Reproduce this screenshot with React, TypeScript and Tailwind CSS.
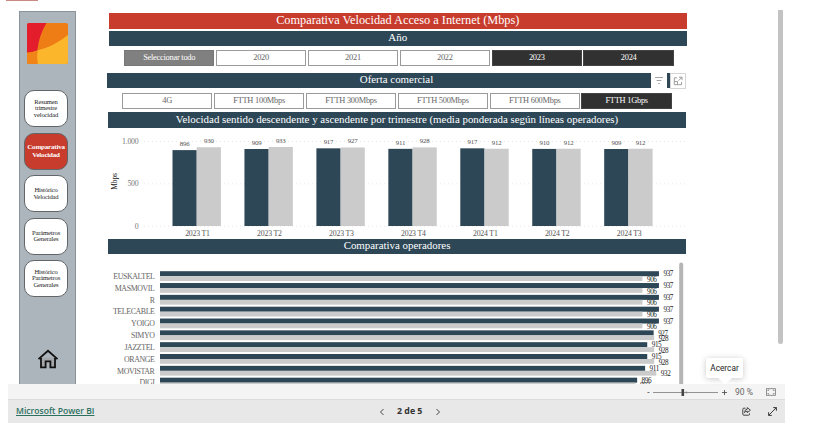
import clsx from "clsx"

const NAV_ITEMS = [
  { lines: ["Resumen", "trimestre", "velocidad"] },
  { lines: ["Comparativa", "Velocidad"], active: true },
  { lines: ["Histórico", "Velocidad"] },
  { lines: ["Parámetros", "Generales"] },
  { lines: ["Histórico", "Parámetros", "Generales"] },
]

const YEARS = [
  { label: "Seleccionar todo", tone: "partial" },
  { label: "2020" },
  { label: "2021" },
  { label: "2022" },
  { label: "2023", tone: "selected" },
  { label: "2024", tone: "selected" },
]

const OFFERS = [
  { label: "4G" },
  { label: "FTTH 100Mbps" },
  { label: "FTTH 300Mbps" },
  { label: "FTTH 500Mbps" },
  { label: "FTTH 600Mbps" },
  { label: "FTTH 1Gbps", tone: "selected" },
]

const QUARTERS = [
  { label: "2023 T1", down: 896, up: 930 },
  { label: "2023 T2", down: 909, up: 933 },
  { label: "2023 T3", down: 917, up: 927 },
  { label: "2023 T4", down: 911, up: 928 },
  { label: "2024 T1", down: 917, up: 912 },
  { label: "2024 T2", down: 910, up: 912 },
  { label: "2024 T3", down: 909, up: 912 },
]

const OPERATORS = [
  { label: "EUSKALTEL", down: 937, up: 906 },
  { label: "MASMOVIL", down: 937, up: 906 },
  { label: "R", down: 937, up: 906 },
  { label: "TELECABLE", down: 937, up: 906 },
  { label: "YOIGO", down: 937, up: 906 },
  { label: "SIMYO", down: 927, up: 928 },
  { label: "JAZZTEL", down: 915, up: 928 },
  { label: "ORANGE", down: 915, up: 928 },
  { label: "MOVISTAR", down: 911, up: 932 },
  { label: "DIGI", down: 896, up: 893 },
]

type Option = { label: string; tone?: string }

const Slicer = ({ options }: { options: Option[] }) => (
  <div className="flex h-4 gap-[1.5px]">
    {options.map(({ label, tone }) => (
      <button
        key={label}
        className={clsx(
          "flex w-[90.4px] shrink-0 items-center justify-center border text-[8.4px] leading-none tracking-[-0.25px] whitespace-nowrap",
          !tone && "border-[#9a9a9a] bg-white text-[#666]",
          tone === "partial" && "border-[#777] bg-[#808080] text-white",
          tone === "selected" && "border-[#444] bg-[#313131] text-white"
        )}
      >
        {label}
      </button>
    ))}
  </div>
)

const Logo = () => (
  <svg viewBox="0 0 41 41" className="ml-[7px] h-[41px] w-[41px]" aria-hidden="true">
    <defs>
      <clipPath id="logo">
        <rect width="41" height="41" rx="2" />
      </clipPath>
    </defs>
    <g clipPath="url(#logo)">
      <rect width="41" height="41" fill="#ee7d16" />
      <path d="M0 0H19.5Q12 12 10.300 27.500Q5.500 29.200 0 29.800Z" fill="#e31d2b" />
      <path d="M10.300 27.500Q26 24 41 12V41H10.500Q9.700 34 10.300 27.500Z" fill="#fbb62c" />
      <path d="M0 29.800Q5.500 29.200 10.300 27.500Q9.700 34 10.500 41H0Z" fill="#f08419" />
    </g>
  </svg>
)

const Sidebar = () => (
  <aside className="mt-[11px] ml-[11px] flex h-[374px] w-[57px] shrink-0 flex-col border-t border-r border-l border-[#8b949b] bg-[#acb5bc] pt-[11px]">
    <Logo />
    <nav className="mt-[26px] ml-[4px] flex flex-col gap-[5.5px]">
      {NAV_ITEMS.map(({ lines, active }) => (
        <button
          key={lines.join(" ")}
          className={clsx(
            "flex h-[37px] w-11 flex-col items-center justify-center rounded-[10px] border border-[#626669]",
            active
              ? "bg-[#c83c2e] text-[7px] leading-[8.5px] font-bold tracking-[-0.2px] text-white"
              : "bg-white text-[6.6px] leading-[6.3px] tracking-[-0.15px] text-[#222]"
          )}
        >
          {lines.map((line) => (
            <span key={line} className="whitespace-nowrap">{line}</span>
          ))}
        </button>
      ))}
    </nav>
    <svg viewBox="0 0 22 20" className="mt-[52px] ml-[17px] h-5 w-[22px]" fill="none" stroke="#111" strokeWidth="1.8">
      <path d="M1.500 10.200L11 1.800L20.500 10.200" />
      <path d="M4 8.500V18.300H8.600V12.300H13.400V18.300H18V8.500" fill="#a4a7a9" />
    </svg>
  </aside>
)

const QuarterChart = () => {
  const y = (value: number) => 98 - value * 0.0847

  return (
    <svg width="579" height="111" viewBox="0 0 579 111" className="block tracking-[-0.2px]" fontSize="7.800" fill="#555">
      {[1000, 500, 0].map((tick) => (
        <g key={tick}>
          <line x1="36" x2="579" y1={y(tick) + 0.2} y2={y(tick) + 0.2} stroke="#dcdcdc" strokeWidth="0.700" strokeDasharray="1 3" />
          <text x="30.500" y={y(tick) + 2.5} textAnchor="end" fill="#777">
            {tick === 1000 ? "1.000" : tick}
          </text>
        </g>
      ))}
      <text transform="translate(9 53.500) rotate(-90)" textAnchor="middle" fontSize="7.500" fill="#222">
        Mbps
      </text>
      {QUARTERS.map(({ label, down, up }, i) => {
        const x = 64.5 + i * 71.95
        return (
          <g key={label}>
            <rect x={x} y={y(down)} width="24.200" height={down * 0.0847} fill="#2d4757" />
            <rect x={x + 24.2} y={y(up)} width="24.200" height={up * 0.0847} fill="#cbcbcb" />
            <text x={x + 12.1} y={y(down) - 4} textAnchor="middle" fontSize="6.900">{down}</text>
            <text x={x + 36.3} y={y(up) - 4.200} textAnchor="middle" fontSize="6.900">{up}</text>
            <text x={x + 25} y="107.500" textAnchor="middle">{label}</text>
          </g>
        )
      })}
    </svg>
  )
}

const OperatorChart = () => (
  <svg width="579" height="130" viewBox="0 0 579 130" className="block tracking-[-0.4px]" fontSize="7.900">
    {OPERATORS.map(({ label, down, up }, i) => {
      const y = 17.2 + i * 11.83
      return (
        <g key={label}>
          <text x="46.500" y={y + 7.8} textAnchor="end" fill="#666">{label}</text>
          <rect x="52" y={y} width={down * 0.5325} height="5" fill="#2d4757" />
          <rect x="52" y={y + 5} width={up * 0.5325} height="4.800" fill="#cbcbcb" />
          <text x={56.5 + down * 0.5325} y={y + 5.2} fontSize="7.200" fill="#222">{down}</text>
          <text x={56.5 + up * 0.5325} y={y + 10.5} fontSize="7.200" fill="#222">{up}</text>
        </g>
      )
    })}
    <rect x="571.200" y="8.500" width="4" height="126" rx="2" fill="#b5b5b5" />
  </svg>
)

const bar = "flex items-center justify-center bg-[#2d4757] text-white whitespace-nowrap leading-none"

const Report = () => (
  <section className="ml-[31px] w-[580px] shrink-0 pt-[13px]">
    <h1 className="ml-[2px] flex h-4 w-[577.5px] items-center justify-center bg-[#c83c2e] pb-px text-[12.3px] leading-none whitespace-nowrap text-white">
      Comparativa Velocidad Acceso a Internet (Mbps)
    </h1>
    <h2 className={clsx(bar, "mt-[1.5px] ml-[2px] h-[15px] w-[577.5px] pb-[2px] text-[11px]")}>Año</h2>
    <div className="mt-[4.5px] ml-[17px]">
      <Slicer options={YEARS} />
    </div>
    <div className="mt-[7px] flex h-[15px] w-[579px] bg-[#2d4757]">
      <h2 className={clsx(bar, "w-[579px] shrink-0 pb-[2px] text-[10.9px]")}>Oferta comercial</h2>
      <div className="-ml-[35px] flex shrink-0 gap-[2.5px]">
        <button className="flex h-[15.5px] w-4 items-center justify-center bg-white" aria-label="Filtros">
          <svg width="10" height="9" viewBox="0 0 10 9" stroke="#999" strokeWidth="0.900">
            <path d="M1 1.500H9M2.600 4.500H7.400M4.200 7.500H5.800" />
          </svg>
        </button>
        <button className="flex h-[15.5px] w-4 items-center justify-center border border-[#d5d5d5] bg-white" aria-label="Modo de enfoque">
          <svg width="10" height="10" viewBox="0 0 10 10" fill="none" stroke="#888" strokeWidth="0.800">
            <path d="M4 1.800H1.300V8.700H8.500V6M6 1.200H9V4.200M9 1.200L5.500 4.700M1.300 5.500H4.500V8.700" />
          </svg>
        </button>
      </div>
    </div>
    <div className="mt-[5px] ml-[15px]">
      <Slicer options={OFFERS} />
    </div>
    <h2 className={clsx(bar, "mt-[3px] ml-px h-4 w-[578px] pb-[2px] text-[10.9px]")}>
      Velocidad sentido descendente y ascendente por trimestre (media ponderada según líneas operadores)
    </h2>
    <div className="ml-px">
      <QuarterChart />
    </div>
    <h2 className={clsx(bar, "ml-px h-[15px] w-[578px] pb-[2px] text-[10.9px]")}>Comparativa operadores</h2>
    <div className="ml-px">
      <OperatorChart />
    </div>
  </section>
)

const ZoomBar = () => (
  <div className="relative flex h-[15px] items-center bg-[#f4f4f4] pt-px pl-[639px] text-[8.5px] leading-none text-[#666]">
    <span className="w-[6px] text-[#333]">-</span>
    <svg width="66" height="9" viewBox="0 0 66 9">
      <path d="M0 4.500H65" stroke="#888" strokeWidth="0.900" />
      <rect x="28.500" y="1" width="2.600" height="7" fill="#444" />
      <circle cx="33.500" cy="4.500" r="0.900" fill="#888" />
    </svg>
    <svg width="5" height="5" viewBox="0 0 5 5" className="ml-[3px]" stroke="#555" strokeWidth="0.900">
      <path d="M0 2.500H5M2.500 0V5" />
    </svg>
    <span className="ml-[8px] w-[31px] font-['Roboto',sans-serif] whitespace-nowrap">90 %</span>
    <svg width="10" height="8" viewBox="0 0 10 8" fill="none" stroke="#777" strokeWidth="0.800">
      <rect x="0.500" y="0.700" width="9" height="6.600" />
      <path d="M2 3V2H3.200M6.800 2H8V3M8 5V6H6.800M3.200 6H2V5" />
    </svg>
    <div className="absolute bottom-[21px] left-[698px] flex h-[20px] w-[37px] items-center justify-center rounded-[2px] bg-white font-['Roboto',sans-serif] text-[8.3px] text-[#222] shadow-[0_1px_6px_rgba(0,0,0,0.22)]">
      Acercar
      <svg width="14" height="7" viewBox="0 0 14 7" className="absolute top-full left-[12px]">
        <path d="M0 0H14L7 6.500Z" fill="#fff" />
      </svg>
    </div>
  </div>
)

const Footer = () => (
  <footer className="flex h-[24px] items-center border-t border-[#dcdcdc] bg-[#e8e8e8] text-[#333]">
    <a href="#" className="ml-2 w-[355px] text-[8.6px] leading-none font-semibold whitespace-nowrap text-[#2c705f] underline underline-offset-1">
      Microsoft Power BI
    </a>
    <svg width="6" height="8" viewBox="0 0 6 8" className="ml-[7.5px]" fill="none" stroke="#444">
      <path d="M4.500 1L1.500 4L4.500 7" />
    </svg>
    <span className="ml-[12.5px] w-[26px] text-[8.8px] leading-none font-bold whitespace-nowrap">2 de 5</span>
    <svg width="6" height="8" viewBox="0 0 6 8" className="ml-[12px]" fill="none" stroke="#444">
      <path d="M1.500 1L4.500 4L1.500 7" />
    </svg>
    <svg width="9" height="9" viewBox="0 0 9 9" className="ml-[301px]" fill="none" stroke="#333" strokeWidth="0.900">
      <path d="M3.500 1.200H1.800Q0.800 1.200 0.800 2.200V7.200Q0.800 8.200 1.800 8.200H6.500Q7.500 8.200 7.500 7.200V6.300" />
      <path d="M5.300 0.600L8.400 3.200L5.300 5.600V4.200Q3.400 4.200 2.500 5.600Q2.700 2.300 5.300 2.100Z" />
    </svg>
    <svg width="9" height="9" viewBox="0 0 9 9" className="ml-[17px]" fill="none" stroke="#333" strokeWidth="0.950">
      <path d="M5.200 0.600H8.400V3.800M8.400 0.600L0.600 8.400M0.600 5.200V8.400H3.800" />
    </svg>
  </footer>
)

export default function App() {
  return (
    <div className="h-[435px] w-[825px] overflow-hidden bg-white pl-2 font-['Open_Sans',sans-serif]">
      <main className="w-[777px]">
        <div className="relative flex h-[384px] font-['Liberation_Serif',serif]">
          <div className="absolute top-0 -left-[2px] h-px w-8 bg-[#c98a84]" />
          <Sidebar />
          <Report />
          <div className="mt-[10px] ml-[91px] h-[334px] w-[5px] shrink-0 rounded-b-full bg-[#c3c3c3]" />
        </div>
        <ZoomBar />
        <Footer />
      </main>
    </div>
  )
}
